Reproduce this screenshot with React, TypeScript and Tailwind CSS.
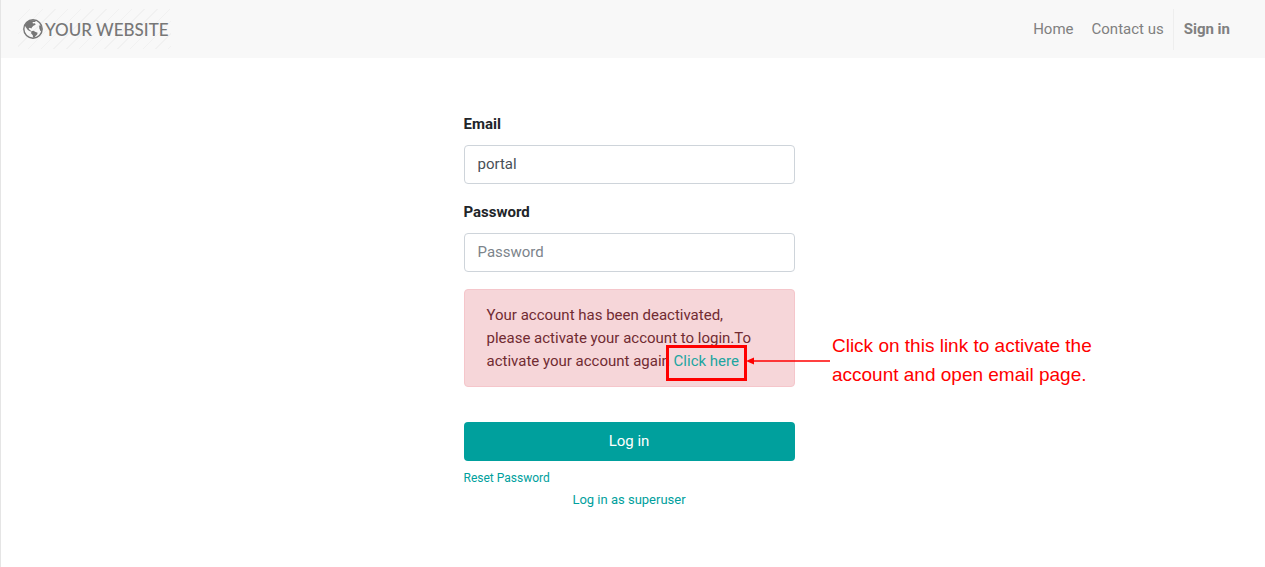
import React from "react";

function Globe() {
  return (
    <svg className="size-5" viewBox="0 0 20 20" aria-hidden="true">
      <circle cx="10" cy="10" r="9.2" fill="none" stroke="currentColor" strokeWidth="1.4" />
      <path
        fill="currentColor"
        d="M1.6 6.2L4.6 2.6L8 1.2L13 1.3L12.2 3.1L9.6 3L9.9 4.6L12 4.2L12.6 5.8L10.4 6.8L9 8.2L8.4 9.4L6.8 8.8L5.6 9.6L6.6 10.8L8.2 12L7.4 12.4L4.8 11L3 8.6Z"
      />
      <path
        fill="currentColor"
        d="M8.2 12.2L10.4 11.8L12.6 13L14.6 13.8L14.2 15.6L12.6 17L11.4 18.8L10 18.6L9.8 16.2L8.2 14.4Z"
      />
      <path fill="currentColor" d="M17 5.4L18.8 8.2L18.8 12.6L17.4 12L16.4 9.6L16.2 7.4Z" />
    </svg>
  );
}

function Header() {
  return (
    <header className="flex h-[58px] items-center justify-between bg-[#f8f8f8] pl-[17px] pr-[35px] text-[#808080]">
      <a
        href="#home"
        className="flex h-10 items-center gap-0.5 bg-[repeating-linear-gradient(135deg,#f8f8f8_0px,#f8f8f8_8px,#f1f1f1_8px,#f1f1f1_9px)] pl-[5px] pr-0.5 font-[Lato,sans-serif] text-[17px] font-medium text-[#777777]"
      >
        <Globe />
        YOUR WEBSITE
      </a>
      <nav className="flex h-[41px] items-center">
        <a href="#home" className="px-[9px]">Home</a>
        <a href="#contact" className="px-[9px]">Contact us</a>
        <a href="#signin" className="flex h-full items-center border-l border-[#eeeeee] pl-[10px] font-bold">
          Sign in
        </a>
      </nav>
    </header>
  );
}

function Field({ id, label, ...rest }: { id: string; label: string } & React.InputHTMLAttributes<HTMLInputElement>) {
  return (
    <div className="mb-[17px]">
      <label htmlFor={id} className="mb-[9px] block font-bold text-[#212529]">
        {label}
      </label>
      <input
        id={id}
        className="block h-[39px] w-full rounded border border-[#ced4da] bg-white px-[13px] pb-0.5 text-[#495057] placeholder:text-[#7c848b]"
        {...rest}
      />
    </div>
  );
}

function Callout() {
  return (
    <span className="pointer-events-none absolute -left-2 -right-2 -top-[5px] h-9 border-[3px] border-[#ff0000]">
      <svg
        className="absolute left-full top-[7px] ml-0.5"
        width="84"
        height="12"
        viewBox="0 0 84 12"
        aria-hidden="true"
      >
        <path d="M6 6H84" stroke="#ff0000" strokeWidth="1.5" />
        <path d="M0 6L8 2.5V9.5Z" fill="#ff0000" />
      </svg>
      <span className="absolute -top-[17px] left-full ml-[88px] whitespace-nowrap font-['Liberation_Sans',Arial,sans-serif] text-[19px] leading-[29px] text-[#ff0000]">
        Click on this link to activate the
        <br />
        account and open email page.
      </span>
    </span>
  );
}

export default function App() {
  return (
    <div className="min-h-screen border-l border-[#e5e5e5] bg-white font-[Roboto,sans-serif] text-[15px] leading-[23px]">
      <Header />
      <main className="pb-14 pr-2 pt-[55px]">
        <form className="mx-auto w-full max-w-[331px]" onSubmit={(e) => e.preventDefault()}>
          <Field id="email" label="Email" type="text" defaultValue="portal" />
          <Field id="password" label="Password" type="password" placeholder="Password" />
          <p
            role="alert"
            className="rounded border border-[#f5c6cb] bg-[#f6d6d9] pb-[13px] pl-[22px] pr-8 pt-[14px] text-[#712b32]"
          >
            Your account has been deactivated, please activate your account to login.To activate your account again{" "}
            <span className="relative inline-block">
              <a href="#activate" className="text-[#21a5a0]">Click here</a>
              <Callout />
            </span>
          </p>
          <button type="submit" className="mt-[35px] h-[39px] w-full rounded bg-[#00a09d] text-white">
            Log in
          </button>
          <div className="mt-[7px] flex flex-col leading-[21px] text-[#00a09d]">
            <a href="#reset" className="self-start text-[12px]">Reset Password</a>
            <a href="#superuser" className="self-center text-[13px]">Log in as superuser</a>
          </div>
        </form>
      </main>
    </div>
  );
}
